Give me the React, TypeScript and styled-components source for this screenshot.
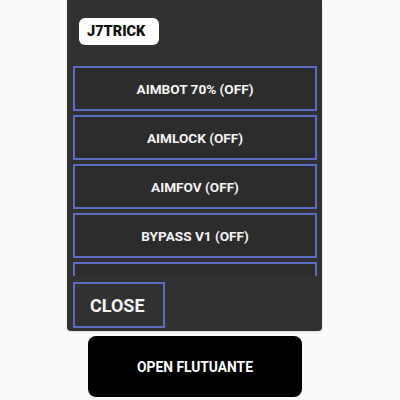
import React from "react";
import styled, { createGlobalStyle } from "styled-components";

const Global = createGlobalStyle`
  html, body { margin: 0; padding: 0; background: #fafafa; }
  body { font-family: Roboto, "Liberation Sans", sans-serif; }
`;

const Page = styled.div`
  width: 400px;
  height: 400px;
  display: flex;
  flex-direction: column;
  padding-left: 67px;
  box-sizing: border-box;
  overflow: hidden;
`;

const Panel = styled.div`
  width: 255px;
  height: 331px;
  box-sizing: border-box;
  background: #313131;
  border-radius: 0 0 4px 4px;
  padding: 18px 5px 3px 6px;
  display: flex;
  flex-direction: column;
  box-shadow: 0 1px 2px rgba(0,0,0,0.15);
`;

const Badge = styled.div`
  align-self: flex-start;
  margin-left: 6px;
  width: 80px;
  height: 27px;
  box-sizing: border-box;
  background: #ffffff;
  border-radius: 6px;
  display: flex;
  align-items: center;
  padding-left: 8px;
  font-weight: 900;
  font-size: 14.5px;
  color: #111;
`;

const List = styled.div`
  margin-top: 21px;
  height: 210px;
  overflow: hidden;
  display: flex;
  flex-direction: column;
  gap: 4px;
`;

const Item = styled.div`
  flex: 0 0 45px;
  box-sizing: border-box;
  border: 2px solid #5a6dc2;
  background: #2c2c2c;
  color: #f4f4f4;
  font-weight: 700;
  font-size: 13.6px;
  display: flex;
  align-items: center;
  justify-content: center;
`;

const Close = styled.div`
  margin-top: 6px;
  width: 92px;
  height: 46px;
  box-sizing: border-box;
  border: 2px solid #5a6dc2;
  color: #f4f4f4;
  font-weight: 700;
  font-size: 18px;
  display: flex;
  align-items: center;
  padding-left: 15px;
`;

const OpenButton = styled.div`
  margin-top: 5px;
  margin-left: 21px;
  width: 214px;
  height: 61px;
  background: #000;
  border-radius: 8px;
  color: #fff;
  font-weight: 700;
  font-size: 13.8px;
  display: flex;
  align-items: center;
  justify-content: center;
`;

const items = ["AIMBOT 70% (OFF)", "AIMLOCK (OFF)", "AIMFOV (OFF)", "BYPASS V1 (OFF)", ""];

export default function App() {
  return (
    <>
      <Global />
      <Page>
        <Panel>
          <Badge>J7TRICK</Badge>
          <List>
            {items.map((t, i) => (
              <Item key={i}>{t}</Item>
            ))}
          </List>
          <Close>CLOSE</Close>
        </Panel>
        <OpenButton>OPEN FLUTUANTE</OpenButton>
      </Page>
    </>
  );
}
